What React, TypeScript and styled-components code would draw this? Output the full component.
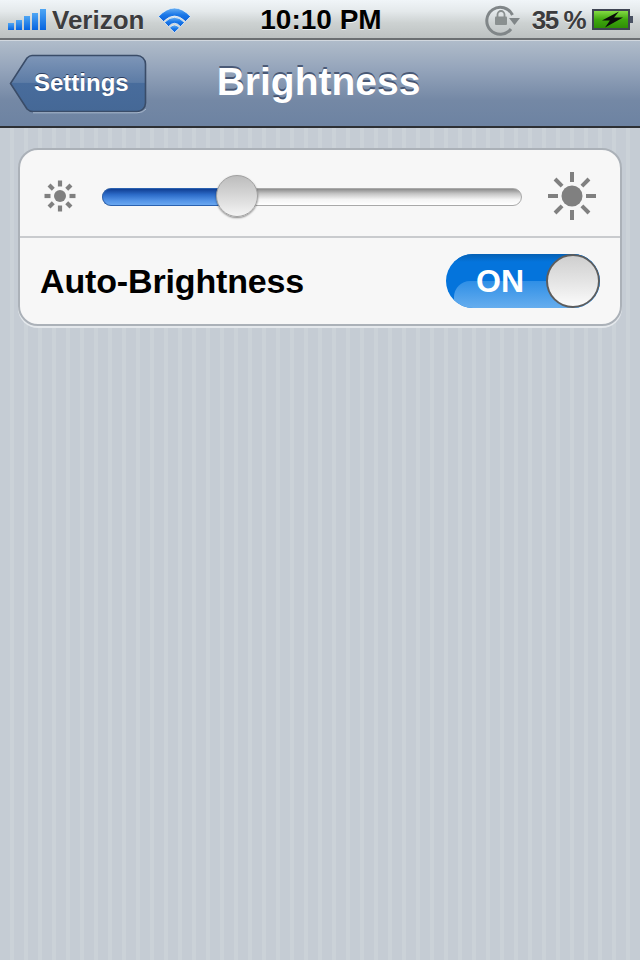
import React from "react";
import styled, { createGlobalStyle } from "styled-components";

const Global = createGlobalStyle`
  html, body { margin: 0; padding: 0; background: #c5ccd4; }
  #root { width: 640px; height: 960px; overflow: hidden; }
`;

const Screen = styled.div`
  width: 640px;
  height: 960px;
  display: flex;
  flex-direction: column;
  font-family: "Liberation Sans", Arial, sans-serif;
  background-color: #c5ccd4;
  background-image: repeating-linear-gradient(90deg, #c5ccd4 0 10px, #cbd2d8 10px 14px);
`;

const StatusBar = styled.div`
  height: 40px;
  flex: none;
  box-sizing: border-box;
  display: grid;
  grid-template-columns: 1fr auto 1fr;
  align-items: center;
  background: linear-gradient(#f0f5f8 0%, #e4e9eb 30%, #cdd2d2 60%, #bcc1c1 100%);
  border-bottom: 2px solid #6b6f72;
  padding: 2px 6px 0 8px;
`;

const StatusLeft = styled.div`
  display: flex;
  align-items: center;
`;

const StatusRight = styled.div`
  display: flex;
  align-items: center;
  justify-content: flex-end;
`;

const Carrier = styled.span`
  font-size: 26px;
  font-weight: bold;
  color: #3c3c3e;
  margin: 0 14px 0 4px;
  text-shadow: 0 1px 0 rgba(255, 255, 255, 0.7);
`;

const Clock = styled.span`
  font-size: 28px;
  font-weight: bold;
  color: #000;
  text-shadow: 0 1px 0 rgba(255, 255, 255, 0.7);
`;

const Percent = styled.span`
  font-size: 26px;
  font-weight: bold;
  letter-spacing: -1.5px;
  color: #3c3c3e;
  margin: 0 7px 0 11px;
  text-shadow: 0 1px 0 rgba(255, 255, 255, 0.7);
`;

const NavBar = styled.div`
  height: 88px;
  flex: none;
  box-sizing: border-box;
  display: grid;
  grid-template-columns: 1fr auto 1fr;
  align-items: center;
  padding: 0 0 0 9px;
  border-top: 1px solid #d2d8df;
  border-bottom: 2px solid #2d3034;
  background: linear-gradient(#b0bcca 0%, #93a3ba 35%, #7488a5 70%, #6d83a2 100%);
`;

const BackButton = styled.div`
  position: relative;
  width: 138px;
  height: 60px;
  display: flex;
  align-items: center;
  justify-content: flex-start;
  padding: 0 0 1px 25px;
  box-sizing: border-box;
`;

const BackShape = styled.svg`
  position: absolute;
  left: 0;
  top: 0;
`;

const BackLabel = styled.span`
  position: relative;
  font-size: 24px;
  font-weight: bold;
  color: #fff;
  text-shadow: 0 -1px 0 rgba(30, 45, 75, 0.8);
`;

const Title = styled.h1`
  margin: 0;
  font-size: 39px;
  line-height: 1;
  font-weight: bold;
  color: #fff;
  transform: translate(-6px, -2px);
  text-shadow: 0 -2px 0 rgba(50, 65, 95, 0.75);
`;

const Content = styled.div`
  padding: 20px 18px 0;
`;

const Card = styled.div`
  box-sizing: border-box;
  height: 178px;
  background: #f7f7f7;
  border: 2px solid #abb1b8;
  border-radius: 20px;
  box-shadow: 0 2px 0 #e4e8ec;
  display: flex;
  flex-direction: column;
`;

const SliderRow = styled.div`
  height: 88px;
  flex: none;
  display: flex;
  align-items: center;
  padding: 5px 24px 0 24px;
  box-sizing: border-box;
  border-bottom: 2px solid #c9cbce;
`;

const Track = styled.div`
  position: relative;
  flex: 1;
  height: 18px;
  top: 1px;
  margin: 0 26px 0 26px;
  border-radius: 9px;
  box-sizing: border-box;
  border: 1px solid #a9a9a9;
  background: linear-gradient(#8c8c8c 0%, #c6c6c6 30%, #f4f4f4 65%, #ffffff 100%);
`;

const TrackFill = styled.div`
  position: absolute;
  left: -1px;
  top: -1px;
  bottom: -1px;
  border-radius: 9px 0 0 9px;
  box-sizing: border-box;
  border: 1px solid #2a61b0;
  border-right: none;
  background: linear-gradient(#103e93 0%, #2c6bc8 35%, #5595e8 75%, #6ba8f0 100%);
`;

const Thumb = styled.div`
  position: absolute;
  top: 50%;
  width: 42px;
  height: 42px;
  margin: -22px 0 0 -21px;
  box-sizing: border-box;
  border-radius: 50%;
  border: 1px solid #a0a0a0;
  background: linear-gradient(#bdbdbd 0%, #d2d2d2 40%, #f4f4f4 100%);
  box-shadow: 0 1px 2px rgba(0, 0, 0, 0.45);
`;

const SwitchRow = styled.div`
  flex: 1;
  display: flex;
  align-items: center;
  justify-content: space-between;
  padding: 0 20px 0 20px;
`;

const RowLabel = styled.span`
  font-size: 34px;
  font-weight: bold;
  color: #000;
  letter-spacing: -0.15px;
`;

const Switch = styled.div`
  position: relative;
  width: 154px;
  height: 54px;
  box-sizing: border-box;
  border-radius: 27px;
  overflow: hidden;
  background: #0474dc;
  display: flex;
  align-items: center;
  padding-left: 30px;
`;

const SwitchGloss = styled.div`
  position: absolute;
  left: 8px;
  right: 0;
  top: 27px;
  bottom: -6px;
  border-radius: 16px 0 0 0;
  background: linear-gradient(#2f8fe6, #72b4f0);
`;

const SwitchTop = styled.div`
  position: absolute;
  left: 0;
  right: 0;
  top: 0;
  height: 8px;
  background: linear-gradient(#0560b4, #0474dc);
`;

const SwitchText = styled.span`
  position: relative;
  font-size: 32px;
  font-weight: bold;
  color: #fff;
`;

const SwitchKnob = styled.div`
  position: absolute;
  right: 0;
  top: 0;
  width: 54px;
  height: 54px;
  box-sizing: border-box;
  border-radius: 50%;
  border: 2px solid #5d5d5d;
  background: linear-gradient(#cfcfcf 0%, #e6e6e6 55%, #fbfbfb 100%);
`;

const Bars = () => (
  <svg width="40" height="24" viewBox="0 0 40 24">
    <defs>
      <linearGradient id="barGrad" x1="0" y1="0" x2="0" y2="1">
        <stop offset="0" stopColor="#4ea6f4" />
        <stop offset="1" stopColor="#0664e0" />
      </linearGradient>
    </defs>
    <rect x="0" y="15" width="6" height="7" fill="url(#barGrad)" />
    <rect x="8" y="12" width="6" height="10" fill="url(#barGrad)" />
    <rect x="16" y="8" width="6" height="14" fill="url(#barGrad)" />
    <rect x="24" y="5" width="6" height="17" fill="url(#barGrad)" />
    <rect x="32" y="1" width="6" height="21" fill="url(#barGrad)" />
  </svg>
);

const Wifi = () => (
  <svg width="33" height="26" viewBox="0 0 33 26">
    <defs>
      <linearGradient id="wifiGrad" x1="0" y1="0" x2="0" y2="1">
        <stop offset="0" stopColor="#6ab0f2" />
        <stop offset="0.5" stopColor="#1a78e8" />
        <stop offset="1" stopColor="#0a60d8" />
      </linearGradient>
    </defs>
    <g fill="url(#wifiGrad)" stroke="#f4f8fa" strokeWidth="0.7" strokeLinejoin="round">
      <path d="M0.5 9.5 Q16.5 -7.5 32.5 9.5 L27.5 14.5 Q16.5 3.5 5.5 14.5 Z" />
      <path d="M6.5 15.5 Q16.5 5 26.5 15.5 L22.5 19.5 Q16.5 13 10.5 19.5 Z" />
      <path d="M16.5 25.5 L11.5 20.8 Q16.5 15 21.5 20.8 Z" />
    </g>
  </svg>
);

const RotationLock = () => (
  <svg width="36" height="32" viewBox="0 0 36 32">
    <path d="M27.5 11 A13.5 13.5 0 1 0 26 25" fill="none" stroke="#808688" strokeWidth="3" />
    <path d="M24 14 H35 L29.5 21 Z" fill="#808688" />
    <rect x="10" y="12.5" width="12" height="8.5" rx="1" fill="#8a9090" />
    <path d="M12.5 13 V10.5 A3.5 3.5 0 0 1 19.5 10.5 V13" fill="none" stroke="#8a9090" strokeWidth="1.8" />
  </svg>
);

const Battery = () => (
  <svg width="42" height="22" viewBox="0 0 42 22">
    <defs>
      <linearGradient id="batGrad" x1="0" y1="0" x2="0" y2="1">
        <stop offset="0" stopColor="#8ce04a" />
        <stop offset="0.5" stopColor="#3fa80e" />
        <stop offset="1" stopColor="#2c8a06" />
      </linearGradient>
    </defs>
    <rect x="1" y="1" width="36" height="19" fill="url(#batGrad)" stroke="#3e4452" strokeWidth="2" />
    <path d="M38 7 H41 V14 H38 Z" fill="#4a5263" />
    <path d="M27 2.5 L10 11.5 H18 L13 18.5 L31 8.5 H22 Z" fill="#0a0a0a" />
  </svg>
);

const Sun = ({ size, r, len, w, rays }: { size: number; r: number; len: number; w: number; rays: number }) => {
  const c = size / 2;
  return (
    <svg width={size} height={size} viewBox={`0 0 ${size} ${size}`}>
      <circle cx={c} cy={c} r={r} fill="#808080" />
      {[0, 45, 90, 135, 180, 225, 270, 315].map((a) => (
        <line
          key={a}
          x1={c}
          y1={c - rays}
          x2={c}
          y2={c - rays - len}
          stroke="#808080"
          strokeWidth={w}
          transform={`rotate(${a} ${c} ${c})`}
        />
      ))}
    </svg>
  );
};

const BackSvg = () => (
  <BackShape width="138" height="60" viewBox="0 0 138 60">
    <defs>
      <linearGradient id="backGrad" x1="0" y1="0" x2="0" y2="1">
        <stop offset="0" stopColor="#7e96b8" />
        <stop offset="0.48" stopColor="#5d7ca6" />
        <stop offset="0.5" stopColor="#486c9c" />
        <stop offset="1" stopColor="#456896" />
      </linearGradient>
    </defs>
    <path
      d="M23 1.5 H128 A8.5 8.5 0 0 1 136.5 10 V49 A8.5 8.5 0 0 1 128 57.5 H24 Q20.5 57.5 18 55 L1.5 29.5 L18 4 Q20.5 1.5 23 1.5 Z"
      fill="url(#backGrad)"
      stroke="#3a4c68"
      strokeWidth="1.6"
    />
    <path d="M24 58.8 H128 Q134 58.8 137 55" fill="none" stroke="#a9b8cc" strokeWidth="1" />
  </BackShape>
);

export default function App() {
  return (
    <Screen>
      <Global />
      <StatusBar>
        <StatusLeft>
          <Bars />
          <Carrier>Verizon</Carrier>
          <Wifi />
        </StatusLeft>
        <Clock>10:10 PM</Clock>
        <StatusRight>
          <RotationLock />
          <Percent>35 %</Percent>
          <Battery />
        </StatusRight>
      </StatusBar>
      <NavBar>
        <BackButton>
          <BackSvg />
          <BackLabel>Settings</BackLabel>
        </BackButton>
        <Title>Brightness</Title>
        <span />
      </NavBar>
      <Content>
        <Card>
          <SliderRow>
            <Sun size={32} r={6} len={6} w={4.2} rays={9.5} />
            <Track>
              <TrackFill style={{ width: "32.1%" }} />
              <Thumb style={{ left: "32.1%" }} />
            </Track>
            <Sun size={48} r={10.5} len={10} w={4} rays={14} />
          </SliderRow>
          <SwitchRow>
            <RowLabel>Auto-Brightness</RowLabel>
            <Switch>
              <SwitchTop />
              <SwitchGloss />
              <SwitchText>ON</SwitchText>
              <SwitchKnob />
            </Switch>
          </SwitchRow>
        </Card>
      </Content>
    </Screen>
  );
}
